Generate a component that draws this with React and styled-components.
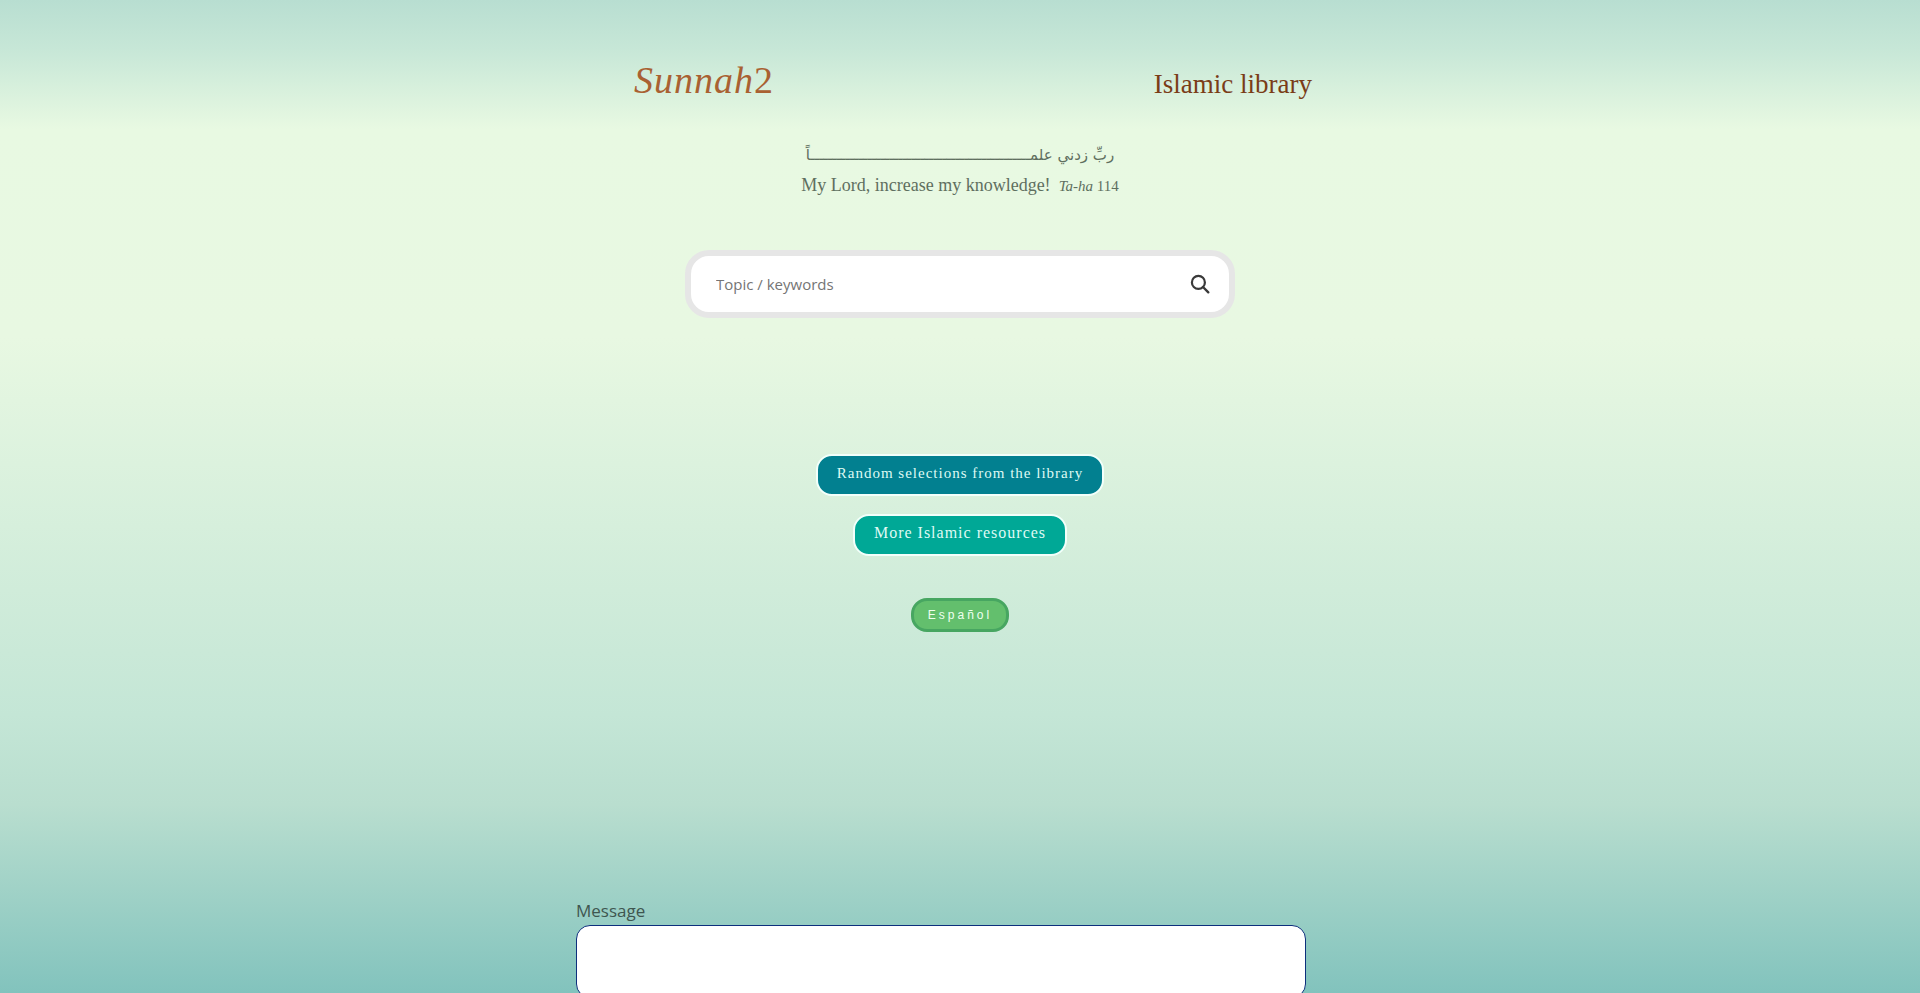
import React, { useState } from 'react';
import styled, { createGlobalStyle } from 'styled-components';

const GlobalStyle = createGlobalStyle`
  * {
    box-sizing: border-box;
  }

  html {
    scrollbar-width: none;
  }

  body {
    margin: 0;
    min-height: 100vh;
    color: #444;
    font-family: 'Open Sans', sans-serif;
    background: linear-gradient(
      #b8ded1 0%,
      #c7e7d7 5%,
      #e8f9e2 13%,
      #e8f8e2 34%,
      #c4e6d6 72%,
      #b9decf 81%,
      #82c3bd 100%
    ) fixed;
  }
`;

const Page = styled.div`
  display: flex;
  flex-direction: column;
  align-items: center;
  padding-top: 56px;
`;

const Header = styled.header`
  display: flex;
  justify-content: space-between;
  align-items: baseline;
  width: 100%;
  max-width: 678px;
  margin-left: 26px;
  font-family: 'Liberation Serif', serif;
`;

const Logo = styled.a`
  font-size: 38px;
  line-height: 48px;
  letter-spacing: 1px;
  color: #a96132;
  text-decoration: none;
`;

const Title = styled.h1`
  margin: 0;
  font-size: 27px;
  font-weight: normal;
  line-height: 48px;
  color: #7a3c17;
`;

const Verse = styled.div`
  display: flex;
  flex-direction: column;
  align-items: center;
  margin-top: 31px;
  font-family: 'Liberation Serif', serif;
  color: #5f6f5f;
`;

const Arabic = styled.p`
  margin: 0;
  font-family: 'DejaVu Sans', sans-serif;
  font-size: 15px;
  line-height: 32px;
  white-space: nowrap;
`;

const Translation = styled.p`
  display: flex;
  align-items: baseline;
  gap: 8px;
  margin: 0;
  font-size: 18px;
  line-height: 28px;
`;

const Source = styled.span`
  font-size: 15px;
`;

const SearchForm = styled.form`
  display: flex;
  align-items: center;
  width: 100%;
  max-width: 550px;
  height: 68px;
  margin-top: 50px;
  padding: 0 19px 0 25px;
  background: #fff;
  border: 6px solid #e6e6e6;
  border-radius: 24px;
`;

const SearchInput = styled.input`
  flex: 1;
  min-width: 0;
  padding: 0;
  border: none;
  outline: none;
  background: none;
  font-family: 'Open Sans', sans-serif;
  font-size: 15px;
  color: #444;

  &::placeholder {
    color: #757575;
    opacity: 1;
  }
`;

const SearchButton = styled.button`
  display: flex;
  padding: 0;
  border: none;
  background: none;
  cursor: pointer;
`;

const Links = styled.nav`
  display: flex;
  flex-direction: column;
  align-items: center;
  gap: 18px;
  margin-top: 136px;
`;

const PillButton = styled.button`
  height: 42px;
  padding: 0 19px 4px;
  border: 2px solid #f2fffa;
  border-radius: 16px;
  background: ${props => props.$color};
  color: #dffaf4;
  font-family: 'Liberation Serif', serif;
  font-size: ${props => props.$large ? '16px' : '15px'};
  letter-spacing: 1px;
  cursor: pointer;
`;

const LanguageButton = styled.button`
  height: 34px;
  margin-top: 42px;
  padding: 0 14px;
  border: 3px solid #47a661;
  border-radius: 16px;
  background: #63bf6d;
  color: #effff0;
  font-family: 'Liberation Sans', sans-serif;
  font-size: 12px;
  letter-spacing: 3px;
  cursor: pointer;
`;

const MessageForm = styled.form`
  display: flex;
  flex-direction: column;
  width: 40%;
  margin-top: 265px;
`;

const Label = styled.label`
  font-size: 17px;
  line-height: 28px;
  color: #3f5650;
`;

const MessageBox = styled.textarea`
  width: 95%;
  height: 73px;
  padding: 12px;
  border: 1px solid #0d2f7c;
  border-radius: 14px;
  background: #fff;
  font-family: 'Open Sans', sans-serif;
  font-size: 15px;
  resize: none;
`;

const kashida = 'ـ'.repeat(50);

const SearchIcon = () => (
  <svg width="20" height="20" viewBox="0 0 20 20" fill="none" stroke="#3a3a3a" aria-hidden="true">
    <circle cx="8.4" cy="8.4" r="6.5" strokeWidth="2.2" />
    <path d="M13 13 18.3 18.3" strokeWidth="2.4" strokeLinecap="round" />
  </svg>
);

const App = () => {
  const [query, setQuery] = useState('');
  const [message, setMessage] = useState('');

  return (
    <>
      <GlobalStyle />
      <Page>
        <Header>
          <Logo href="/"><i>Sunnah</i>2</Logo>
          <Title>Islamic library</Title>
        </Header>

        <Verse>
          <Arabic lang="ar" dir="rtl">ربِّ زدني علم{kashida}اً</Arabic>
          <Translation>
            My Lord, increase my knowledge!
            <Source><i>Ta-ha</i> 114</Source>
          </Translation>
        </Verse>

        <SearchForm role="search" onSubmit={(e) => e.preventDefault()}>
          <SearchInput
            type="text"
            aria-label="Topic / keywords"
            placeholder="Topic / keywords"
            value={query}
            onChange={(e) => setQuery(e.target.value)}
          />
          <SearchButton type="submit" aria-label="Search">
            <SearchIcon />
          </SearchButton>
        </SearchForm>

        <Links>
          <PillButton type="button" $color="#028090">Random selections from the library</PillButton>
          <PillButton type="button" $color="#00a896" $large>More Islamic resources</PillButton>
        </Links>

        <LanguageButton type="button">Español</LanguageButton>

        <MessageForm>
          <Label htmlFor="message">Message</Label>
          <MessageBox
            id="message"
            value={message}
            onChange={(e) => setMessage(e.target.value)}
          />
        </MessageForm>
      </Page>
    </>
  );
};

export default App;
